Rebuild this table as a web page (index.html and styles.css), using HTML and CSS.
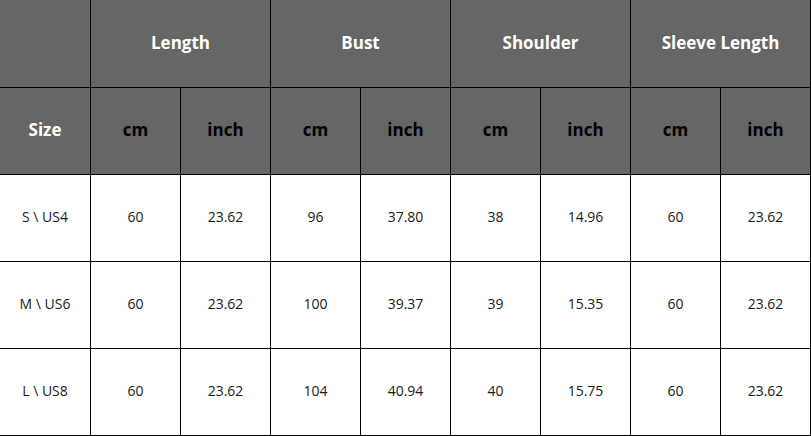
FILE: index.html
```html
<!DOCTYPE html>
<html>
<head>
<meta charset="utf-8">
<link rel="stylesheet" href="styles.css">
</head>
<body>
<div class="chart">
  <div class="cell head"></div>
  <div class="cell head span2">Length</div>
  <div class="cell head span2">Bust</div>
  <div class="cell head span2">Shoulder</div>
  <div class="cell head span2">Sleeve Length</div>

  <div class="cell head">Size</div>
  <div class="cell head unit">cm</div>
  <div class="cell head unit">inch</div>
  <div class="cell head unit">cm</div>
  <div class="cell head unit">inch</div>
  <div class="cell head unit">cm</div>
  <div class="cell head unit">inch</div>
  <div class="cell head unit">cm</div>
  <div class="cell head unit">inch</div>

  <div class="cell">S \ US4</div>
  <div class="cell">60</div>
  <div class="cell">23.62</div>
  <div class="cell">96</div>
  <div class="cell">37.80</div>
  <div class="cell">38</div>
  <div class="cell">14.96</div>
  <div class="cell">60</div>
  <div class="cell">23.62</div>

  <div class="cell">M \ US6</div>
  <div class="cell">60</div>
  <div class="cell">23.62</div>
  <div class="cell">100</div>
  <div class="cell">39.37</div>
  <div class="cell">39</div>
  <div class="cell">15.35</div>
  <div class="cell">60</div>
  <div class="cell">23.62</div>

  <div class="cell">L \ US8</div>
  <div class="cell">60</div>
  <div class="cell">23.62</div>
  <div class="cell">104</div>
  <div class="cell">40.94</div>
  <div class="cell">40</div>
  <div class="cell">15.75</div>
  <div class="cell">60</div>
  <div class="cell">23.62</div>
</div>
</body>
</html>
```
FILE: styles.css
```css
html, body {
  margin: 0;
  padding: 0;
  background: #ffffff;
}
.chart {
  display: grid;
  grid-template-columns: 90px repeat(8, 89px);
  grid-template-rows: 87px repeat(4, 86px);
  gap: 1px;
  padding: 0 1px 1px 0;
  background: #000000;
  width: 811px;
  height: 436px;
  box-sizing: border-box;
  font-family: "Open Sans", "Noto Sans", sans-serif;
}
.cell {
  background: #ffffff;
  color: #1a1a1a;
  font-size: 14px;
  display: flex;
  align-items: center;
  justify-content: center;
  padding-bottom: 3px;
}
.head {
  background: #666666;
  color: #ffffff;
  font-weight: 700;
  font-size: 17px;
}
.head.unit {
  color: #000000;
}
.span2 {
  grid-column: span 2;
}
```
